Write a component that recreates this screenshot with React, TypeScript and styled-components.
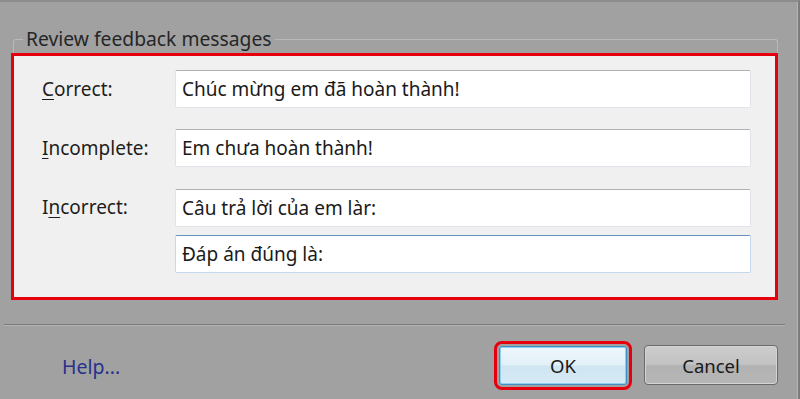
import React from "react";
import styled, { createGlobalStyle } from "styled-components";

const Global = createGlobalStyle`
  html, body { margin: 0; padding: 0; background: #a1a1a1; }
  body { font-family: "Noto Sans", "Open Sans", sans-serif; }
`;

const Window = styled.div`
  position: relative;
  width: 800px;
  height: 399px;
  box-sizing: border-box;
  background: #a1a1a1;
  border-top: 2px solid #8c8c8c;
  border-right: 2px solid #7c7c7c;
  box-shadow: inset -1px 0 0 #b4b4b4;
  margin-right: 3px;
  display: flex;
  flex-direction: column;
  overflow: hidden;
`;

const Group = styled.fieldset`
  margin: 26px 20px 0 13px;
  padding: 0;
  border: 1px solid #b9b9b9;
  border-bottom: none;
  border-radius: 3px 3px 0 0;
  min-width: 0;
`;

const Legend = styled.legend`
  margin-left: 9px;
  padding: 0 3px;
  font-size: 19.3px;
  line-height: 22px;
  color: #262626;
`;

const Highlight = styled.div`
  margin: 3px -1px 0 -3px;
  height: 247px;
  box-sizing: border-box;
  border: 3px solid #e6000e;
  background: #f0f0f0;
  padding: 14px 24px 0 28px;
  display: grid;
  grid-template-columns: 133px 1fr;
  row-gap: 21px;
  align-content: start;
`;

const Label = styled.div`
  font-size: 19px;
  color: #1e1e1e;
  height: 38px;
  display: flex;
  align-items: center;
  u { text-decoration-thickness: 1px; text-underline-offset: 3px; }
`;

const FieldStack = styled.div`
  display: flex;
  flex-direction: column;
  gap: 8px;
  margin-top: 1px;
`;

const Field = styled.div<{ $focused?: boolean }>`
  height: 38px;
  box-sizing: border-box;
  background: #ffffff;
  border: 1px solid ${(p) => (p.$focused ? "#c5d9ec" : "#e2e3ea")};
  border-top-color: ${(p) => (p.$focused ? "#6a8fbd" : "#adb2b5")};
  border-radius: 2px;
  padding: 0 6px;
  display: flex;
  align-items: center;
  font-size: 19px;
  color: #1a1a1a;
  white-space: nowrap;
`;

const Separator = styled.div`
  margin: 24px 13px 0 4px;
  height: 1px;
  background: #7a7a7a;
  border-bottom: 1px solid #b3b3b3;
`;

const Footer = styled.div`
  display: flex;
  align-items: center;
  padding: 19px 20px 0 62px;
`;

const HelpLink = styled.span`
  font-size: 19.5px;
  color: #27318c;
  margin-right: auto;
  margin-top: 2px;
`;

const OkButton = styled.button`
  width: 128px;
  height: 39px;
  box-sizing: border-box;
  border: 1px solid #3d8fc6;
  border-radius: 3px;
  background: linear-gradient(#eef7fc 0%, #e2f0f8 48%, #cfe5f2 52%, #d7eaf5 100%);
  box-shadow: inset 0 0 0 1px #8fd0f2;
  outline: 3px solid #e6000e;
  outline-offset: 2px;
  font-family: inherit;
  font-size: 18.5px;
  color: #1a1a1a;
  padding: 0;
`;

const CancelButton = styled.button`
  width: 134px;
  height: 40px;
  margin-left: 17px;
  box-sizing: border-box;
  border: 1px solid #6b6b6b;
  border-radius: 4px;
  background: linear-gradient(#cdcdcd 0%, #c2c2c2 48%, #b2b2b2 52%, #b6b6b6 100%);
  box-shadow: inset 0 0 0 1px #d4d4d4;
  font-family: inherit;
  font-size: 18.5px;
  color: #1a1a1a;
  padding: 0;
`;

export default function App() {
  return (
    <>
      <Global />
      <Window>
        <Group>
          <Legend>Review feedback messages</Legend>
          <Highlight>
            <Label>
              <span><u>C</u>orrect:</span>
            </Label>
            <Field>Chúc mừng em đã hoàn thành!</Field>
            <Label>
              <span><u>I</u>ncomplete:</span>
            </Label>
            <Field>Em chưa hoàn thành!</Field>
            <Label>
              <span>I<u>n</u>correct:</span>
            </Label>
            <FieldStack>
              <Field>Câu trả lời của em làr:</Field>
              <Field $focused>Đáp án đúng là:</Field>
            </FieldStack>
          </Highlight>
        </Group>
        <Separator />
        <Footer>
          <HelpLink>Help...</HelpLink>
          <OkButton>OK</OkButton>
          <CancelButton>Cancel</CancelButton>
        </Footer>
      </Window>
    </>
  );
}
